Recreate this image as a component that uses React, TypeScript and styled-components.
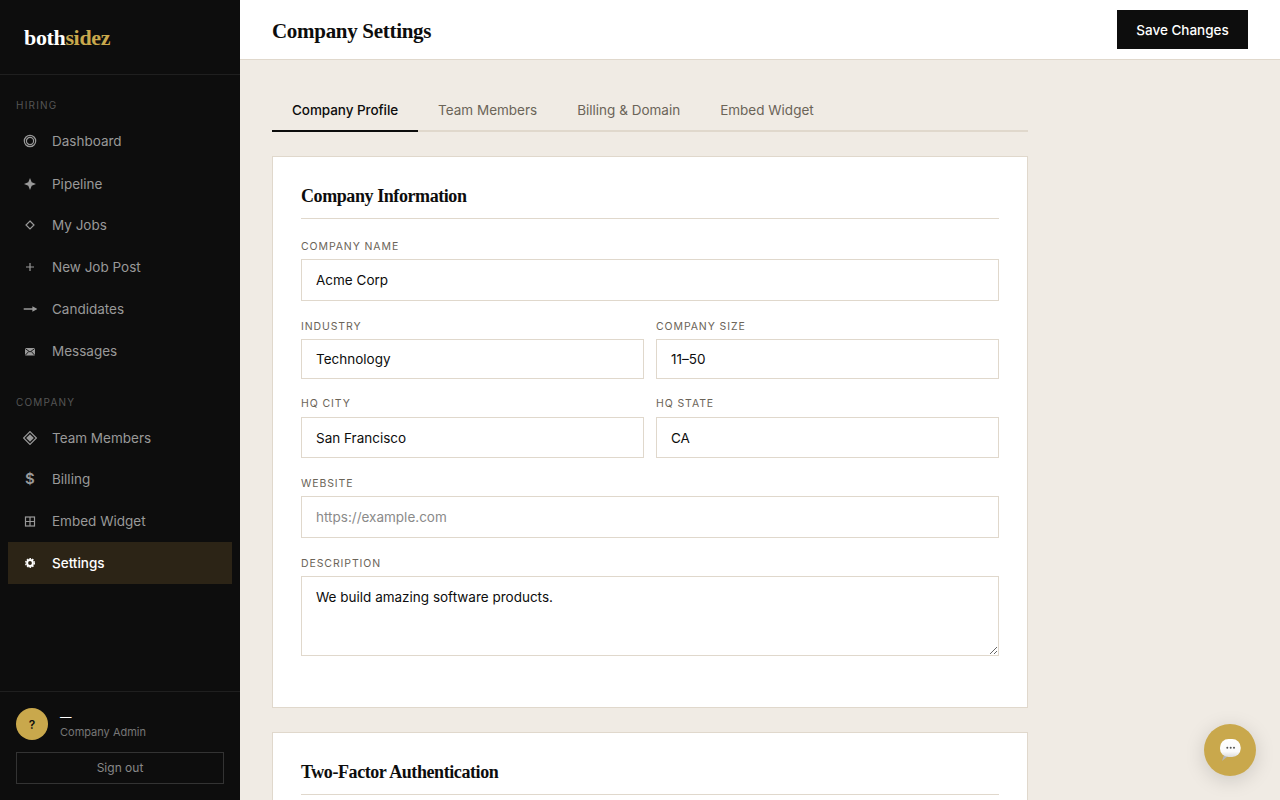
import React from "react";
import styled, { createGlobalStyle } from "styled-components";

const Global = createGlobalStyle`
  html, body { margin: 0; padding: 0; height: 100%; overflow: hidden; }
  body { font-family: Inter, "Noto Sans", sans-serif; background: #f0ebe4; }
  * { box-sizing: border-box; }
`;

const serif = `"Liberation Serif", "DejaVu Serif", serif`;

const Shell = styled.div`display: flex; height: 800px; overflow: hidden;`;
const Sidebar = styled.aside`width: 240px; flex: none; background: #0d0d0d; display: flex; flex-direction: column; height: 800px;`;
const LogoBar = styled.div`height: 75px; padding: 2px 24px 0; display: flex; align-items: center; border-bottom: 1px solid #1f1f1f;`;
const Logo = styled.div`font-family: ${serif}; font-weight: 700; font-size: 22px; color: #fff; letter-spacing: -0.35px;`;
const Gold = styled.span`color: #c9a84c;`;
const Nav = styled.nav`flex: 1; padding: 20px 8px 0;`;
const Section = styled.div<{ $gap?: number }>`margin-top: ${p => p.$gap ?? 0}px;`;
const SectionLabel = styled.div<{ $mb: number }>`height: 20px; padding-left: 8px; font-size: 10px; line-height: 20px; letter-spacing: 1.2px; color: #555; margin-bottom: ${p => p.$mb}px;`;
const Item = styled.div<{ $active?: boolean; $low?: boolean }>`
  height: 42px; display: flex; align-items: center; gap: 16px; padding: ${p => p.$low ? "2px" : "0"} 16px 0;
  font-size: 13.5px; color: ${p => p.$active ? "#fff" : "#999"};
  background: ${p => p.$active ? "#2c2416" : "transparent"};
  font-weight: ${p => p.$active ? 500 : 400};
`;
const IconSlot = styled.span`width: 12px; flex: none; display: flex; justify-content: center;`;
const Icon = styled.svg`width: 14px; height: 14px; flex: none; margin: 0 -1px;`;
const Dollar = styled.span`font-size: 15px; font-weight: 600; line-height: 16px;`;
const Footer = styled.div`border-top: 1px solid #1f1f1f; padding: 16px;`;
const UserRow = styled.div`display: flex; align-items: center; gap: 12px; margin-bottom: 12px;`;
const Avatar = styled.div`width: 32px; height: 32px; border-radius: 50%; background: #c9a84c; color: #0d0d0d; display: flex; align-items: center; justify-content: center; font-size: 12px; font-weight: 600;`;
const UserName = styled.div`font-size: 11.5px; line-height: 18px; font-weight: 500; color: #fff;`;
const UserRole = styled.div`font-size: 11px; line-height: 16px; margin-top: -2px; color: #777;`;
const SignOut = styled.div`height: 32px; padding-bottom: 2px; border: 1px solid #333; display: flex; align-items: center; justify-content: center; font-size: 12px; color: #888;`;

const Main = styled.main`flex: 1; min-width: 0; display: flex; flex-direction: column;`;
const Header = styled.header`height: 60px; flex: none; background: #fff; border-bottom: 1px solid #e0d8cc; display: flex; align-items: center; justify-content: space-between; padding: 0 32px;`;
const Title = styled.h1`margin: 3px 0 0; font-family: ${serif}; font-weight: 700; font-size: 21px; letter-spacing: -0.3px; color: #0d0d0d;`;
const SaveBtn = styled.div`width: 131px; height: 39px; padding-top: 1px; background: #0d0d0d; color: #fff; display: flex; align-items: center; justify-content: center; font-size: 13.5px; font-weight: 500; margin-top: -1px;`;
const Content = styled.div`padding: 28px 32px 0; width: 820px;`;
const Tabs = styled.div`display: flex; border-bottom: 2px solid #e0d8cc; height: 44px; margin-bottom: 24px;`;
const Tab = styled.div<{ $active?: boolean }>`
  height: 44px; padding: 2px 20px 0; display: flex; align-items: center; font-size: 13.5px;
  letter-spacing: ${p => p.$active ? "-0.07px" : "0"};
  font-weight: ${p => p.$active ? 500 : 400};
  color: ${p => p.$active ? "#0d0d0d" : "#6b6458"};
  border-bottom: 2px solid ${p => p.$active ? "#0d0d0d" : "transparent"};
  margin-bottom: -2px;
`;
const Card = styled.section`background: #fff; border: 1px solid #e0d8cc; padding: 28px; margin-bottom: 24px;`;
const CardTitle = styled.h2`margin: 0 0 20px; height: 34px; padding-bottom: 10px; line-height: 23px; border-bottom: 1px solid #e0d8cc; font-family: ${serif}; font-size: 18px; letter-spacing: -0.42px; font-weight: 700; color: #0d0d0d;`;
const Field = styled.div<{ $mb?: number }>`margin-bottom: ${p => p.$mb ?? 0}px;`;
const Row = styled.div<{ $mb?: number }>`display: grid; grid-template-columns: 1fr 1fr; gap: 12px; margin-bottom: ${p => p.$mb ?? 0}px;`;
const Label = styled.label<{ $mb?: number }>`display: block; font-size: 10.5px; line-height: 16px; letter-spacing: 0.9px; color: #6b6458; margin-bottom: ${p => p.$mb ?? 4}px;`;
const Input = styled.input<{ $h?: number }>`
  display: block; width: 100%; height: ${p => p.$h ?? 42}px; border: 1px solid #e0d8cc; border-radius: 0; background: #fff;
  padding: 0 14px; font: 400 13.5px Inter, sans-serif; color: #0d0d0d; outline: none;
  &::placeholder { color: #8a8a8a; opacity: 1; }
`;
const Area = styled.textarea`
  display: block; width: 100%; height: 80px; border: 1px solid #e0d8cc; border-radius: 0; background: #fff;
  padding: 10px 14px; font: 400 13.5px/20px Inter, sans-serif; color: #0d0d0d; outline: none; resize: vertical;
`;
const Fab = styled.div`position: fixed; right: 24px; bottom: 24px; width: 52px; height: 52px; border-radius: 50%; background: #c9a84c; box-shadow: 0 4px 20px rgba(0,0,0,.15); display: flex; align-items: center; justify-content: center;`;

const S = { fill: "none", stroke: "currentColor", strokeWidth: 1.2 } as const;
const icons: Record<string, React.ReactNode> = {
  dash: <><circle cx="7" cy="7" r="5.7" {...S} /><circle cx="7" cy="7" r="3.6" {...S} /></>,
  pipe: <path d="M7 1 L8.7 5.3 L13 7 L8.7 8.7 L7 13 L5.3 8.7 L1 7 L5.3 5.3Z" fill="currentColor" />,
  jobs: <path d="M7 3 L11 7 L7 11 L3 7Z" {...S} />,
  plus: <path d="M7 3V11M3 7H11" {...S} />,
  arrow: <path d="M.7 7H11.5M10 5.3 L13 7 L10 8.7Z" stroke="currentColor" strokeWidth="1.3" fill="currentColor" />,
  mail: <><rect x="2" y="4" width="10" height="7.5" rx=".8" fill="currentColor" /><path d="M2.3 4.6 L7 8 L11.7 4.6M2.5 11 L5.8 7.4M11.5 11 L8.2 7.4" stroke="#0d0d0d" strokeWidth=".9" fill="none" /></>,
  team: <><path d="M7 .6 L13.4 7 L7 13.4 L.6 7Z" {...S} /><path d="M7 3.2 L10.8 7 L7 10.8 L3.2 7Z" fill="currentColor" /></>,
  grid: <><rect x="2.5" y="3" width="9" height="9" {...S} /><path d="M7 3V12M2.5 7.5H11.5" {...S} /></>,
  gear: <><circle cx="7" cy="7" r="2.9" fill="none" stroke="currentColor" strokeWidth="2" /><circle cx="7" cy="7" r="4.4" fill="none" stroke="currentColor" strokeWidth="1.2" strokeDasharray="1.6 1.2" /></>,
};

const NavItem = ({ icon, label, active, low }: { icon: string; label: string; active?: boolean; low?: boolean }) => (
  <Item $active={active} $low={low}>
    <IconSlot>
      {icon === "billing" ? <Dollar>$</Dollar> : <Icon viewBox="0 0 14 14">{icons[icon]}</Icon>}
    </IconSlot>
    {label}
  </Item>
);

export default function App() {
  return (
    <Shell>
      <Global />
      <Sidebar>
        <LogoBar><Logo>both<Gold>sidez</Gold></Logo></LogoBar>
        <Nav>
          <Section>
            <SectionLabel $mb={5}>HIRING</SectionLabel>
            <NavItem icon="dash" label="Dashboard" />
            <NavItem icon="pipe" label="Pipeline" low />
            <NavItem icon="jobs" label="My Jobs" />
            <NavItem icon="plus" label="New Job Post" />
            <NavItem icon="arrow" label="Candidates" />
            <NavItem icon="mail" label="Messages" />
          </Section>
          <Section $gap={20}>
            <SectionLabel $mb={4}>COMPANY</SectionLabel>
            <NavItem icon="team" label="Team Members" low />
            <NavItem icon="billing" label="Billing" />
            <NavItem icon="grid" label="Embed Widget" />
            <NavItem icon="gear" label="Settings" active />
          </Section>
        </Nav>
        <Footer>
          <UserRow>
            <Avatar>?</Avatar>
            <div>
              <UserName>—</UserName>
              <UserRole>Company Admin</UserRole>
            </div>
          </UserRow>
          <SignOut>Sign out</SignOut>
        </Footer>
      </Sidebar>
      <Main>
        <Header>
          <Title>Company Settings</Title>
          <SaveBtn>Save Changes</SaveBtn>
        </Header>
        <Content>
          <Tabs>
            <Tab $active>Company Profile</Tab>
            <Tab>Team Members</Tab>
            <Tab>Billing &amp; Domain</Tab>
            <Tab>Embed Widget</Tab>
          </Tabs>
          <Card>
            <CardTitle>Company Information</CardTitle>
            <Field $mb={18}>
              <Label>COMPANY NAME</Label>
              <Input readOnly value="Acme Corp" />
            </Field>
            <Row $mb={17}>
              <Field><Label>INDUSTRY</Label><Input $h={40} readOnly value="Technology" /></Field>
              <Field><Label>COMPANY SIZE</Label><Input $h={40} readOnly value="11–50" /></Field>
            </Row>
            <Row $mb={18}>
              <Field><Label $mb={5}>HQ CITY</Label><Input $h={41} readOnly value="San Francisco" /></Field>
              <Field><Label $mb={5}>HQ STATE</Label><Input $h={41} readOnly value="CA" /></Field>
            </Row>
            <Field $mb={18}>
              <Label>WEBSITE</Label>
              <Input readOnly placeholder="https://example.com" />
            </Field>
            <Field $mb={23}>
              <Label>DESCRIPTION</Label>
              <Area readOnly value="We build amazing software products." />
            </Field>
          </Card>
          <Card>
            <CardTitle>Two-Factor Authentication</CardTitle>
          </Card>
        </Content>
      </Main>
      <Fab>
        <svg width="24" height="24" viewBox="0 0 24 24">
          <defs>
            <linearGradient id="b" x1="0" y1="0" x2="0" y2="1"><stop offset="0" stopColor="#fff" /><stop offset=".7" stopColor="#fafafa" /><stop offset="1" stopColor="#dcdcdc" /></linearGradient>
          </defs>
          <path d="M6 17 L4 23 L9.5 18.5Z" fill="#b5b5b5" />
          <rect x="2" y="1" width="20.7" height="18" rx="8.5" fill="url(#b)" />
          <circle cx="9.3" cy="9.7" r="1" fill="#555" />
          <circle cx="12.7" cy="9.7" r="1" fill="#555" />
          <circle cx="16" cy="9.7" r="1" fill="#555" />
        </svg>
      </Fab>
    </Shell>
  );
}
